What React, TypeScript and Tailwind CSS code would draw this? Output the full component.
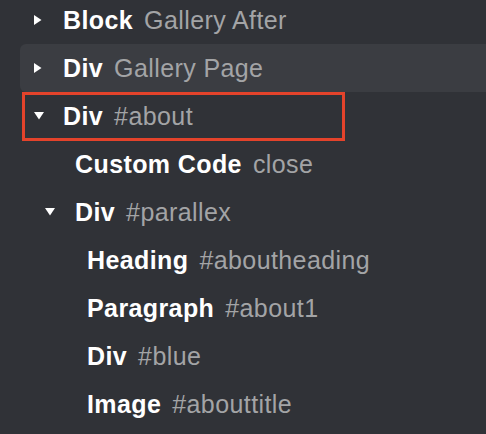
import React from "react";

type Node = {
  label: string;
  meta: string;
  level: number;
  arrow?: "right" | "down";
  hover?: boolean;
  selected?: boolean;
};

const nodes: Node[] = [
  { label: "Block", meta: "Gallery After", level: 0, arrow: "right" },
  { label: "Div", meta: "Gallery Page", level: 0, arrow: "right", hover: true },
  { label: "Div", meta: "#about", level: 0, arrow: "down", selected: true },
  { label: "Custom Code", meta: "close", level: 1 },
  { label: "Div", meta: "#parallex", level: 1, arrow: "down" },
  { label: "Heading", meta: "#aboutheading", level: 2 },
  { label: "Paragraph", meta: "#about1", level: 2 },
  { label: "Div", meta: "#blue", level: 2 },
  { label: "Image", meta: "#abouttitle", level: 2 },
];

const indent = ["pl-[63px]", "pl-[75px]", "pl-[87px]"];
const arrowPos = ["left-[34px]", "left-[45px]", "left-[57px]"];

function Arrow({ dir, level }: { dir: "right" | "down"; level: number }) {
  return (
    <span className={`absolute top-1/2 -translate-y-1/2 ${arrowPos[level]}`}>
      {dir === "right" ? (
        <svg width="8" height="10" viewBox="0 0 8 10">
          <path d="M0 0 L7.5 5 L0 10 Z" fill="#ffffff" />
        </svg>
      ) : (
        <svg width="10" height="8" viewBox="0 0 10 8">
          <path d="M0 0 L10 0 L5 7.5 Z" fill="#ffffff" />
        </svg>
      )}
    </span>
  );
}

function Row({ node }: { node: Node }) {
  return (
    <div className="relative h-12">
      {node.hover && (
        <div className="absolute inset-y-0 left-[20px] right-0 rounded-l-md bg-[#3b3d42]" />
      )}
      {node.selected && (
        <div className="absolute top-0 left-[22px] w-[323px] h-[49px] border-[3px] border-[#e4432b]" />
      )}
      {node.arrow && <Arrow dir={node.arrow} level={node.level} />}
      <div className={`relative flex h-full items-center ${indent[node.level]}`}>
        <span className="font-bold text-white">{node.label}</span>
        <span className="ml-[11px] text-[#a3a4a6]">{node.meta}</span>
      </div>
    </div>
  );
}

export default function App() {
  return (
    <div
      className="w-[486px] h-[434px] overflow-hidden bg-[#303237] text-[25px] tracking-[0.4px] leading-none"
      style={{ fontFamily: '"Liberation Sans", Arial, sans-serif' }}
    >
      <div className="-mt-1">
        {nodes.map((n, i) => (
          <Row key={i} node={n} />
        ))}
      </div>
    </div>
  );
}
